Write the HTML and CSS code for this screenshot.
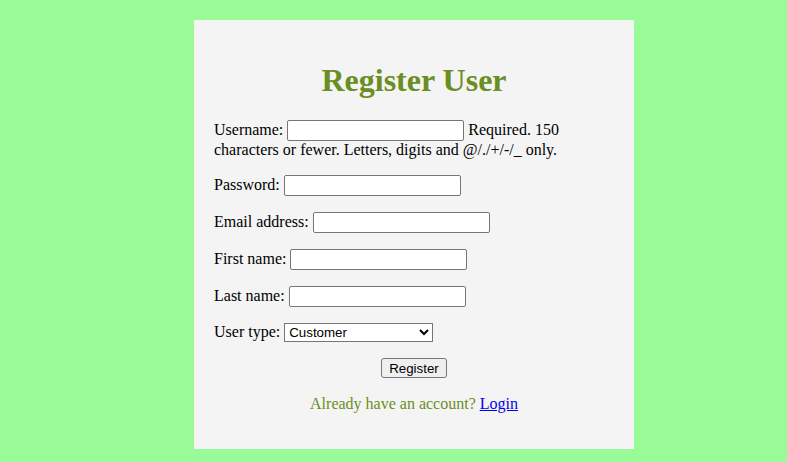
FILE: index.html
```html
<!DOCTYPE html>
<html>
<head>
<meta charset="utf-8">
<title>Register User</title>
<link rel="stylesheet" href="styles.css">
</head>
<body>
<div class="card">
  <h1 class="title">Register User</h1>
  <form class="form">
    <p class="row"><label for="u">Username:</label> <input class="field" type="text" id="u"> <span class="help">Required. 150 characters or fewer. Letters, digits and @/./+/-/_ only.</span></p>
    <p class="row"><label for="p">Password:</label> <input class="field" type="password" id="p"></p>
    <p class="row"><label for="e">Email address:</label> <input class="field" type="email" id="e"></p>
    <p class="row"><label for="f">First name:</label> <input class="field" type="text" id="f"></p>
    <p class="row"><label for="l">Last name:</label> <input class="field" type="text" id="l"></p>
    <p class="row"><label for="t">User type:</label> <select class="choice" id="t"><option>Customer</option><option>Restaurant</option></select></p>
    <button class="submit" type="button">Register</button>
  </form>
  <p class="alt">Already have an account? <a class="link" href="#">Login</a></p>
</div>
</body>
</html>
```
FILE: styles.css
```css
html, body {
  margin: 0;
  padding: 0;
}
body {
  background: #98fb98;
  font-family: "Liberation Serif", "Times New Roman", serif;
  font-size: 16px;
  color: #000;
}
.card {
  width: 400px;
  padding: 20px 20px 36px;
  margin: 20px 0 0 194px;
  background: #f4f4f4;
}
.title {
  font-size: 32px;
  font-weight: bold;
  color: #6b8e23;
  text-align: center;
  margin: 22px 0 21px;
}
.form {
  margin: 0;
}
.row {
  margin: 16px 0;
}
.field {
  width: 177px;
  height: 21px;
  box-sizing: border-box;
  border: 1px solid #767676;
  border-radius: 2px;
  padding: 1px 2px;
  font-family: "Liberation Sans", Arial, sans-serif;
  font-size: 13.33px;
  background: #fff;
  vertical-align: baseline;
}
.choice {
  width: 149px;
  height: 19px;
  box-sizing: border-box;
  border: 1px solid #767676;
  border-radius: 0;
  font-family: "Liberation Sans", Arial, sans-serif;
  font-size: 13.33px;
  background: #fff;
}
.submit {
  display: block;
  margin: 0 auto;
  height: 20px;
  box-sizing: border-box;
  font-family: "Liberation Sans", Arial, sans-serif;
  font-size: 13.33px;
  padding: 1px 7px;
  border: 1px solid #767676;
  border-radius: 3px;
  background: #efefef;
  color: #000;
}
.alt {
  text-align: center;
  color: #6b8e23;
  margin: 17px 0 0;
}
.link {
  color: #0000ee;
  text-decoration: underline;
}
```
